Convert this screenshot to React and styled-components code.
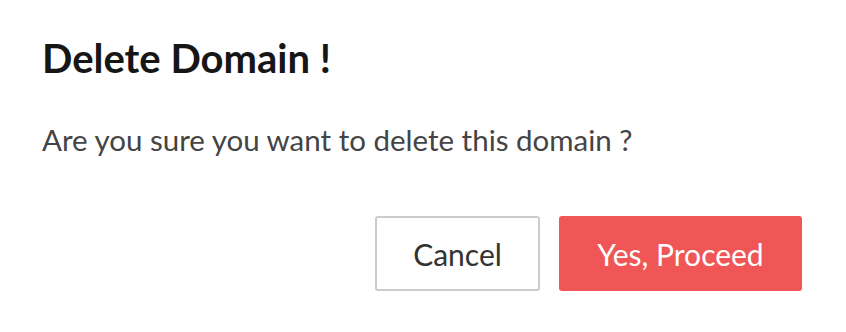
import React from "react";
import styled, { createGlobalStyle } from "styled-components";

const Global = createGlobalStyle`
  html, body { margin: 0; padding: 0; background: #ffffff; }
  body { font-family: Lato, "Noto Sans", sans-serif; }
`;

const Dialog = styled.div`
  width: 846px;
  height: 332px;
  box-sizing: border-box;
  padding: 36px 44px 0 42px;
  display: flex;
  flex-direction: column;
  background: #fff;
`;

const Title = styled.h2`
  margin: 0;
  font-family: Lato, sans-serif;
  font-weight: 700;
  font-size: 40px;
  line-height: 44px;
  color: #161616;
`;

const Message = styled.p`
  margin: 42px 0 0 0;
  font-family: Lato, sans-serif;
  font-weight: 400;
  font-size: 29.5px;
  line-height: 36px;
  color: #444444;
`;

const Actions = styled.div`
  margin-top: 58px;
  display: flex;
  justify-content: flex-end;
  gap: 19px;
`;

const Button = styled.button`
  height: 75px;
  box-sizing: border-box;
  padding: 0;
  width: ${(p) => p.$w}px;
  border-radius: 3px;
  font-family: Lato, sans-serif;
  font-size: 30px;
  font-weight: 400;
  cursor: pointer;
  border: ${(p) => (p.$primary ? "none" : "2px solid #cccccc")};
  background: ${(p) => (p.$primary ? "#f05656" : "#ffffff")};
  color: ${(p) => (p.$primary ? "#ffffff" : "#333333")};
`;

export default function App() {
  return (
    <>
      <Global />
      <Dialog>
        <Title>Delete Domain !</Title>
        <Message>Are you sure you want to delete this domain ?</Message>
        <Actions>
          <Button $w={165}>Cancel</Button>
          <Button $primary $w={243}>Yes, Proceed</Button>
        </Actions>
      </Dialog>
    </>
  );
}
